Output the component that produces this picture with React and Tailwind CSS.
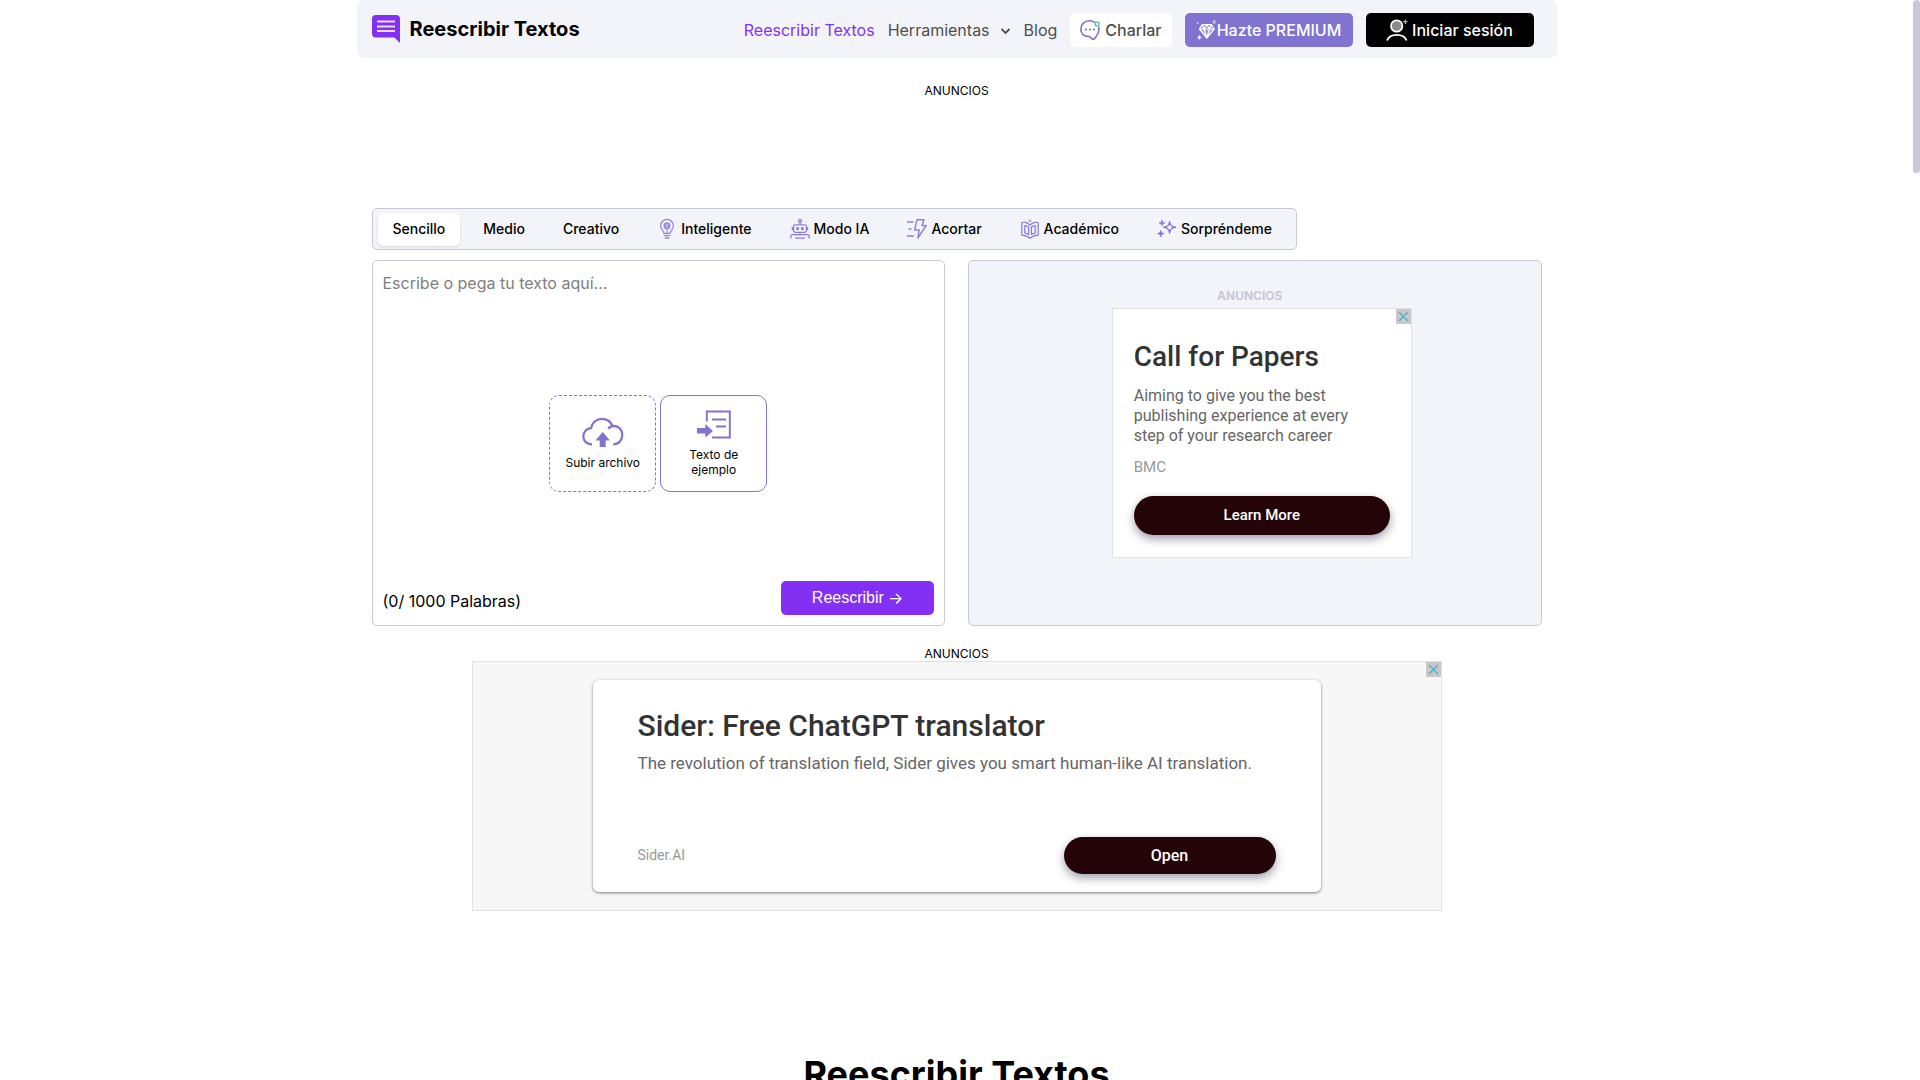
import React from "react";

const INTER = "font-['Inter','Liberation_Sans',sans-serif]";

function LogoIcon() {
  return (
    <svg className="size-7" viewBox="0 0 28 28" fill="none" aria-hidden="true">
      <path d="M4 0h20a4 4 0 0 1 4 4v24l-5.500-5.500H4a4 4 0 0 1-4-4V4a4 4 0 0 1 4-4z" fill="#8430f2" />
      <path d="M5 6.500h18M5 11.500h18M5 16h18" stroke="#eadcff" strokeWidth="2" />
    </svg>
  );
}

function ChatIcon() {
  return (
    <svg className="size-5" viewBox="0 0 20 20" fill="none" aria-hidden="true">
      <path
        d="M14.300 2.200C13 1.200 11.300.8 9.500.8 4.600.8.800 4.400.800 9c0 4.800 3.500 7.300 8 7.500.9 0 1.300.3 1.700 1 .8 1.300 2 1.900 3.200 1.600 1.300-.3 1.500-1.500 2.400-2.600 2.100-2.300 2.900-4.800 2.900-7.500 0-.8 0-1.200-.2-1.800"
        stroke="#7b70d0"
        strokeWidth="1.600"
        strokeLinecap="round"
      />
      <circle cx="17" cy="4" r="2" stroke="#5ec9a6" strokeWidth="1.600" />
      <circle cx="6" cy="9.500" r="1.100" fill="#7b70d0" />
      <circle cx="10" cy="9.500" r="1.100" fill="#7b70d0" />
      <circle cx="14" cy="9.500" r="1.100" fill="#7b70d0" />
    </svg>
  );
}

function DiamondIcon() {
  return (
    <svg className="h-[22px] w-[21px]" viewBox="0 0 21 22" fill="none" aria-hidden="true">
      <path d="M10.500 19 3.500 10l2.500-4.500h9.500L18.500 10z" fill="#fff" fillOpacity="0.25" />
      <path
        d="M10.800 19 3.500 10l2.700-4.500h9.200L18.300 10zM3.500 10h14.800M6.200 5.500 8 10l2.800 9 2.800-9 1.800-4.500M8 10l2.800-4.500L13.600 10"
        stroke="#fff"
        strokeWidth="1.200"
        strokeLinejoin="round"
      />
      <path d="M18.300 1v4M16.300 3h4" stroke="#fff" strokeWidth="1" strokeDasharray="1.400 1.200" />
      <circle cx="1.600" cy="4" r="0.800" fill="#fff" />
      <path d="m3.400 15.800.8 1.800 1.800.8-1.800.8-.8 1.800-.8-1.800-1.800-.8 1.800-.8z" fill="#fff" />
    </svg>
  );
}

function UserIcon() {
  return (
    <svg className="h-[22px] w-[22px]" viewBox="0 0 22 22" fill="none" aria-hidden="true">
      <circle cx="10.700" cy="7" r="5.700" fill="#8b8b8b" stroke="#fff" strokeWidth="1.700" />
      <path d="M1 21.500c1.500-4 4.800-5.700 9.800-5.700s8.300 1.700 9.800 5.700" stroke="#fff" strokeWidth="1.800" />
      <path d="M19.300.5v4.500M17 2.700h4.600" stroke="#e5cf5c" strokeWidth="1.100" />
    </svg>
  );
}

function BulbIcon() {
  return (
    <svg className="size-5" viewBox="0 0 20 20" fill="none" stroke="#8d80da" strokeWidth="1.200" aria-hidden="true">
      <path d="M7 14.300c0-2.200-3.400-3.800-3.400-7.500a6.400 6.400 0 0 1 12.800 0c0 3.700-3.400 5.300-3.400 7.500z" />
      <path d="M6.800 16.600h6.400M7.800 19h4.400" strokeWidth="1.400" />
      <circle cx="10" cy="6.800" r="2.900" />
      <path d="M10 4v5.600M8.600 5.300v3M11.400 5.300v3M10 10v4" strokeWidth="1" />
    </svg>
  );
}

function RobotIcon() {
  return (
    <svg className="size-5" viewBox="0 0 20 20" fill="none" stroke="#8d80da" strokeWidth="1.300" aria-hidden="true">
      <circle cx="10" cy="2" r="1.500" />
      <path d="M10 3.500v2.300" />
      <rect x="3.600" y="5.800" width="12.800" height="7.600" rx="1.800" />
      <circle cx="7.600" cy="9.600" r="1" fill="#8d80da" />
      <circle cx="12.400" cy="9.600" r="1" fill="#8d80da" />
      <path d="M2.400 8v3.200M17.600 8v3.200M10 13.400v2.200" />
      <path d="M.8 19.600v-2c0-1.200.8-2 2-2h14.400c1.200 0 2 .8 2 2v2M5 19.200h10" />
    </svg>
  );
}

function BoltIcon() {
  return (
    <svg className="size-5" viewBox="0 0 20 20" fill="none" stroke="#8d80da" strokeWidth="1.400" aria-hidden="true">
      <path d="M10 .8h7l-2 5.700h4.200L10.800 19l1.400-8H7.600z" strokeLinejoin="round" />
      <path d="M0 3h6.500M1.500 10h3M0 17h7" />
    </svg>
  );
}

function BookIcon() {
  return (
    <svg className="size-5" viewBox="0 0 20 20" fill="none" stroke="#8d80da" strokeWidth="1.300" aria-hidden="true">
      <path d="M10 6C8 4 5.500 3.500 4.500 3l-2.700.8v12.400c3 .2 6 .9 8.200 3 2.200-2.100 5.200-2.800 8.200-3V3.800L15.500 3C14.500 3.500 12 4 10 6z" strokeLinejoin="round" />
      <path d="M4.800 6.600c1.700.2 2.800.6 3.800 1.400v7.400c-1-.7-2.300-1.100-3.800-1.300zM15.200 6.600c-1.700.2-2.800.6-3.800 1.400v7.400c1-.7 2.300-1.100 3.800-1.300z" strokeLinejoin="round" />
      <path d="m10 .5 1.200 1.200L10 2.900 8.800 1.700z" strokeWidth="0.900" />
    </svg>
  );
}

function SparklesIcon() {
  return (
    <svg className="size-5" viewBox="0 0 20 20" fill="none" stroke="#8377d4" aria-hidden="true">
      <path d="M12.600 2.800c.5 3.600 1.800 4.900 5.900 5.500-4.100.6-5.400 1.900-5.900 5.700-.5-3.800-1.800-5.100-5.900-5.700 4.100-.6 5.400-1.900 5.900-5.500z" strokeWidth="1.400" strokeLinejoin="round" />
      <path d="M5 1.200c.2 1.900.9 2.600 2.900 2.800C5.900 4.200 5.200 4.900 5 6.800 4.800 4.900 4.100 4.200 2.100 4 4.100 3.800 4.800 3.100 5 1.200zM3.800 11.200c.3 2.300 1.100 3 3.300 3.400-2.200.4-3 1.100-3.300 3.400-.3-2.300-1.100-3-3.300-3.400 2.200-.4 3-1.100 3.300-3.400z" fill="#8377d4" strokeWidth="0.800" />
    </svg>
  );
}

function CloudUploadIcon() {
  return (
    <svg className="h-[30px] w-[42px]" viewBox="0 0 42 30" fill="none" aria-hidden="true">
      <path d="M10 27.300C5 27.600 1.300 24 1.300 19.500c0-4.600 3.300-8 7.700-8.300C10.300 5.500 14.600 1.800 20 1.800c4.700 0 8.500 2.600 10.300 6.700" stroke="#7f74ce" strokeWidth="2.300" />
      <path d="M26.300 11.800c1.400-1.900 3.300-2.800 5.700-2.800 4.700 0 8.300 3.900 8.300 9 0 5.200-3.600 9.300-9 9.300" stroke="#7f74ce" strokeWidth="2.300" />
      <path d="M20.700 15 28 23.500h-4.300V30h-6v-6.500h-4.300z" fill="#7f74ce" />
    </svg>
  );
}

function SampleTextIcon() {
  return (
    <svg className="h-[29px] w-[34px]" viewBox="0 0 34 29" fill="none" aria-hidden="true">
      <path d="M9.800 11.500V1.500h23v26H15" stroke="#7f74ce" strokeWidth="1.900" />
      <path d="M15 9.500h14M19 16.500h10" stroke="#7f74ce" strokeWidth="2" />
      <path d="M0 18h8.300v-4l7.700 7-7.700 6.500v-4H0z" fill="#7f74ce" />
    </svg>
  );
}

function CloseAd() {
  return (
    <button type="button" aria-label="Cerrar anuncio" className="absolute top-0 right-0 flex size-[15px] items-center justify-center bg-[#c8c8c8]">
      <svg className="size-[11px]" viewBox="0 0 11 11" fill="none" aria-hidden="true">
        <path d="m1 1 9 9M10 1l-9 9" stroke="#4fb3d1" strokeWidth="1.500" />
      </svg>
    </button>
  );
}

const TABS = [
  { label: "Sencillo", active: true },
  { label: "Medio" },
  { label: "Creativo" },
  { label: "Inteligente", Icon: BulbIcon },
  { label: "Modo IA", Icon: RobotIcon },
  { label: "Acortar", Icon: BoltIcon },
  { label: "Académico", Icon: BookIcon },
  { label: "Sorpréndeme", Icon: SparklesIcon },
];

function Header() {
  return (
    <header className="flex h-[58px] items-center justify-between rounded-md bg-[#f3f4f9] pr-[23px] pl-[15px]">
      <a href="#inicio" className="flex items-center gap-[10px] text-xl font-bold text-black">
        <LogoIcon />
        Reescribir Textos
      </a>
      <nav className="mt-[2px] flex items-center gap-[13px] text-base text-[#4e4e4e]">
        <a href="#reescribir" className="text-[#8430f2]">Reescribir Textos</a>
        <button type="button" className="flex items-center gap-[10px]">
          Herramientas
          <svg className="mt-[3px] size-[11px]" viewBox="0 0 11 11" fill="none" aria-hidden="true">
            <path d="m1.500 3 4 4 4-4" stroke="#4e4e4e" strokeWidth="1.800" />
          </svg>
        </button>
        <a href="#blog">Blog</a>
        <a href="#charlar" className="flex h-[34px] items-center gap-[5px] rounded-[5px] bg-white px-[10px] font-medium">
          <ChatIcon />
          Charlar
        </a>
        <a href="#premium" className="flex h-[34px] w-[168px] items-center justify-center rounded-[5px] bg-[#8174d0] font-medium text-white">
          <DiamondIcon />
          Hazte PREMIUM
        </a>
        <a href="#sesion" className="flex h-[34px] w-[168px] items-center justify-center gap-1 rounded-[5px] bg-black font-medium text-white">
          <UserIcon />
          Iniciar sesión
        </a>
      </nav>
    </header>
  );
}

function Modes() {
  return (
    <div role="tablist" className="flex h-[42px] w-fit items-center gap-2 rounded-[5px] border border-[#c8c8d8] bg-[#f3f4f9] pr-[9px] pl-[5px]">
      {TABS.map(({ label, active, Icon }) => (
        <button
          key={label}
          type="button"
          role="tab"
          aria-selected={Boolean(active)}
          className={
            "flex h-[33px] items-center gap-1 rounded-[5px] px-[15px] text-sm font-medium text-black " +
            (active ? "bg-white shadow-sm" : "")
          }
        >
          {Icon && <Icon />}
          {label}
        </button>
      ))}
    </div>
  );
}

function Editor() {
  return (
    <section className="flex flex-col rounded-[5px] border border-[#c8c8d8] bg-white">
      <textarea
        aria-label="Texto"
        placeholder="Escribe o pega tu texto aquí..."
        className="h-[134px] w-full resize-none px-[10px] py-[10px] text-base text-black outline-none placeholder:text-[#808080]"
      />
      <div className="flex justify-center gap-1 text-xs leading-[15px] text-black">
        <button type="button" className="flex h-[97px] w-[107px] flex-col items-center justify-center gap-2 rounded-[10px] border border-dashed border-[#8174d0]">
          <CloudUploadIcon />
          Subir archivo
        </button>
        <button type="button" className="flex h-[97px] w-[107px] flex-col items-center justify-center gap-2 rounded-[10px] border border-[#8174d0] px-4">
          <SampleTextIcon />
          Texto de ejemplo
        </button>
      </div>
      <div className="mt-auto flex items-end justify-between px-[10px] pb-[10px]">
        <span className="text-base leading-[28px] text-black">(0/ 1000 Palabras)</span>
        <button type="button" className="flex h-[34px] w-[153px] items-center justify-center gap-1 rounded-[5px] bg-[#8430f2] font-['Liberation_Sans',sans-serif] text-base text-white">
          Reescribir <span className="font-['Inter',sans-serif]">→</span>
        </button>
      </div>
    </section>
  );
}

function SquareAd() {
  return (
    <section className="flex flex-col items-center rounded-[5px] border border-[#c8c8d8] bg-[#f3f4f9] pt-[25px] pl-[14px]">
      <div className="w-[300px]">
        <p className="pr-6 pb-[2px] text-center text-xs leading-[20px] font-bold text-[#c8c8d8]">ANUNCIOS</p>
        <article className="relative h-[250px] border border-[#e2e2e2] bg-white px-[21px] pt-[30px] font-['Roboto',sans-serif]">
          <CloseAd />
          <h2 className="text-[28px] leading-[36px] font-medium text-[#333]">Call for Papers</h2>
          <p className="mt-[11px] pr-6 text-base leading-[20px] text-[#666]">
            Aiming to give you the best publishing experience at every step of your research career
          </p>
          <p className="mt-[11px] text-[15px] leading-[20px] text-[#999]">BMC</p>
          <button type="button" className="mt-[19px] h-[39px] w-full rounded-full bg-[#250407] text-[15px] font-medium text-white shadow-[0_4px_10px_rgba(40,40,70,0.45)]">
            Learn More
          </button>
        </article>
      </div>
    </section>
  );
}

function WideAd() {
  return (
    <article className="relative mx-auto flex h-[250px] w-full max-w-[970px] items-center justify-center border border-[#e2e2e2] bg-[#f7f7f7] font-['Roboto',sans-serif]">
      <CloseAd />
      <div className="flex h-[212px] w-[728px] flex-col rounded-md bg-white px-[45px] pt-[28px] pb-[18px] shadow-[0_1px_3px_rgba(0,0,0,0.5)]">
        <h2 className="text-[30px] leading-[36px] font-medium text-[#333]">Sider: Free ChatGPT translator</h2>
        <p className="mt-[7px] text-[17px] leading-[24px] text-[#666]">
          The revolution of translation field, Sider gives you smart human-like AI translation.
        </p>
        <div className="mt-auto flex items-center justify-between">
          <span className="text-[14px] text-[#999]">Sider.AI</span>
          <button type="button" className="h-[37px] w-[212px] rounded-full bg-[#250407] text-base font-medium text-white shadow-[0_4px_10px_rgba(40,40,70,0.45)]">
            Open
          </button>
        </div>
      </div>
    </article>
  );
}

export default function App() {
  return (
    <div className={"flex h-screen overflow-hidden bg-white " + INTER}>
      <div className="min-w-0 flex-1">
        <div className="mx-auto max-w-[1200px]">
          <Header />
          <main className="px-[15px]">
            <p className="mt-[25px] text-center text-xs text-black">ANUNCIOS</p>
            <div className="mt-[109px]">
              <Modes />
            </div>
            <div className="mt-[10px] grid h-[366px] grid-cols-2 gap-[23px]">
              <Editor />
              <SquareAd />
            </div>
            <p className="mt-[20px] text-center text-xs leading-[15px] text-black">ANUNCIOS</p>
            <WideAd />
            <h1 className="mt-[141px] text-center text-4xl leading-[44px] font-bold text-black">Reescribir Textos</h1>
          </main>
        </div>
      </div>
      <div className="w-[7px] shrink-0" aria-hidden="true">
        <div className="h-[173px] rounded-full bg-[#c8c8d8]" />
      </div>
    </div>
  );
}
